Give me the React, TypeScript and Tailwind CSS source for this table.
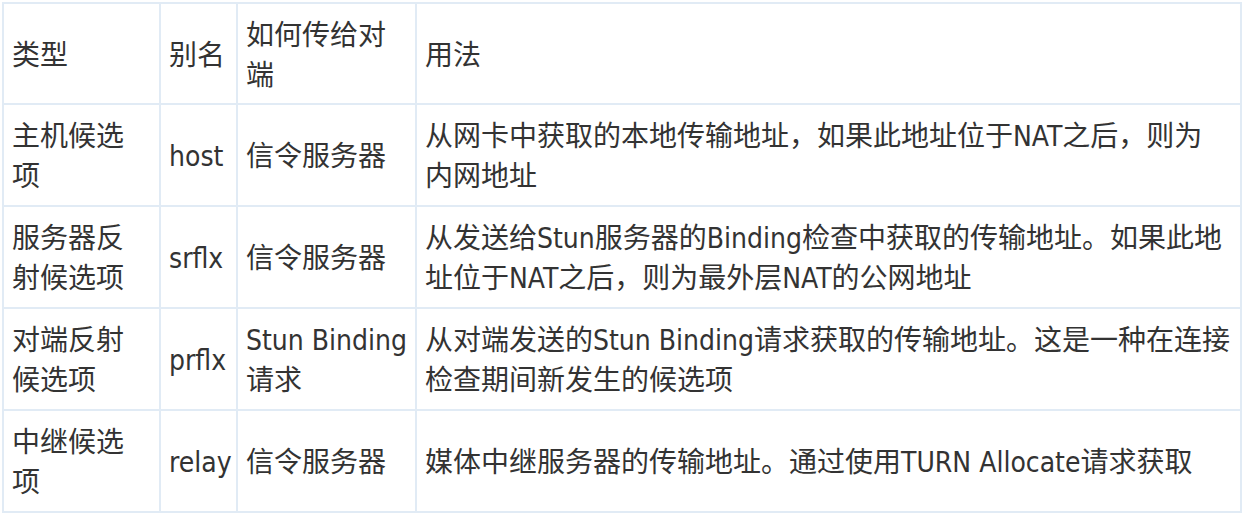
import React from "react";

const rows = [
  {
    type: ["主机候选", "项"],
    alias: "host",
    via: ["信令服务器"],
    usage: ["从网卡中获取的本地传输地址，如果此地址位于NAT之后，则为", "内网地址"],
  },
  {
    type: ["服务器反", "射候选项"],
    alias: "srflx",
    via: ["信令服务器"],
    usage: [
      "从发送给Stun服务器的Binding检查中获取的传输地址。如果此地",
      "址位于NAT之后，则为最外层NAT的公网地址",
    ],
  },
  {
    type: ["对端反射", "候选项"],
    alias: "prflx",
    via: ["Stun Binding", "请求"],
    usage: [
      "从对端发送的Stun Binding请求获取的传输地址。这是一种在连接",
      "检查期间新发生的候选项",
    ],
  },
  {
    type: ["中继候选", "项"],
    alias: "relay",
    via: ["信令服务器"],
    usage: ["媒体中继服务器的传输地址。通过使用TURN Allocate请求获取"],
  },
];

const cell = "border-2 border-[#e1ebf5] pl-[8px] pr-[6px] pt-[4px] align-middle";

function Lines({ items }: { items: string[] }) {
  return (
    <>
      {items.map((t, i) => (
        <span key={i} className="block whitespace-nowrap">
          {t}
        </span>
      ))}
    </>
  );
}

export default function App() {
  return (
    <div className="bg-white w-[1242px] h-[513px] pt-[2px] pl-[2px]">
      <table
        className="border-collapse table-fixed w-[1240px] text-[#333] text-[28px] leading-[40px]"
        style={{ fontFamily: '"DejaVu Sans Condensed", "Noto Sans CJK SC", sans-serif' }}
      >
        <colgroup>
          <col className="w-[157px]" />
          <col className="w-[77px]" />
          <col className="w-[179px]" />
          <col />
        </colgroup>
        <tbody>
          <tr className="h-[101px]">
            <td className={cell}>类型</td>
            <td className={cell}>别名</td>
            <td className={cell}>
              <Lines items={["如何传给对", "端"]} />
            </td>
            <td className={cell}>用法</td>
          </tr>
          {rows.map((r) => (
            <tr key={r.alias} className="h-[102px]">
              <td className={cell}>
                <Lines items={r.type} />
              </td>
              <td className={`${cell} whitespace-nowrap`}>{r.alias}</td>
              <td className={cell}>
                <Lines items={r.via} />
              </td>
              <td className={cell}>
                <Lines items={r.usage} />
              </td>
            </tr>
          ))}
        </tbody>
      </table>
    </div>
  );
}
